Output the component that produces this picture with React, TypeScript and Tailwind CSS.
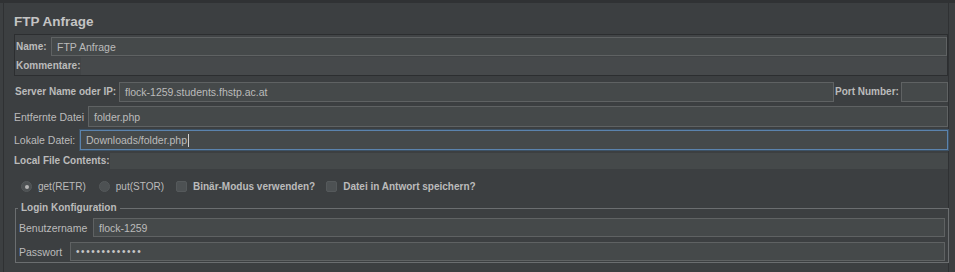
import React from 'react';

const Field: React.FC<{ value?: string; className?: string; focused?: boolean; children?: React.ReactNode }> = ({ value, className = '', focused, children }) => (
  <div
    className={`flex items-center whitespace-nowrap bg-[#45494a] px-[5px] text-[10.5px] text-[#bbbbbb] ${
      focused ? 'border border-[#5b83ad] shadow-[0_0_0_1px_#3d5266]' : 'border border-[#5f6263]'
    } ${className}`}
  >
    {value}
    {children}
  </div>
);

const Radio: React.FC<{ checked?: boolean; label: string }> = ({ checked, label }) => (
  <div className="flex items-center gap-[6px]">
    <span className="flex h-[11px] w-[11px] items-center justify-center rounded-full border border-[#55595b] bg-[#4d5153]">
      {checked && <span className="h-[4px] w-[4px] rounded-full bg-[#b5b5b5]" />}
    </span>
    <span>{label}</span>
  </div>
);

const Check: React.FC<{ label: string }> = ({ label }) => (
  <div className="flex items-center gap-[6px]">
    <span className="h-[11px] w-[11px] rounded-[2px] border border-[#55595b] bg-[#4d5153]" />
    <span className="font-bold">{label}</span>
  </div>
);

export default function App() {
  return (
    <div
      className="relative h-[272px] w-[955px] overflow-hidden bg-[#3c3f41] text-[10px] leading-[12px] text-[#bbbbbb]"
      style={{ fontFamily: '"Liberation Sans", Arial, sans-serif' }}
    >
      <div className="h-[3px] bg-[#303234]" />
      <div className="ml-[3px] mr-[6px] h-[269px] border-l border-r border-[#2f3133] pl-[10px]">
        {/* title */}
        <div className="h-[31px] whitespace-nowrap pt-[11px] text-[13.5px] font-bold leading-[16px] text-[#c4c4c4]">FTP Anfrage</div>

        {/* name + kommentare */}
        <div className="h-[42px] border border-[#2c2e30] bg-[#414446]">
          <div className="flex h-[22px] items-center pl-[1px] pt-[1px]">
            <span className="w-[35px] shrink-0 whitespace-nowrap font-bold">Name:</span>
            <Field value="FTP Anfrage" className="h-[19px] flex-1" />
          </div>
          <div className="flex h-[18px] items-stretch pl-[1px]">
            <span className="flex w-[65px] shrink-0 items-center whitespace-nowrap font-bold">Kommentare:</span>
            <div className="flex-1 bg-[#46494b]" />
          </div>
        </div>

        {/* server */}
        <div className="mt-[6px] flex h-[20px] items-stretch">
          <span className="flex w-[105px] shrink-0 items-center whitespace-nowrap pl-[1px] font-bold">Server Name oder IP:</span>
          <Field value="flock-1259.students.fhstp.ac.at" className="w-[715px] shrink-0" />
          <span className="flex w-[67px] shrink-0 items-center whitespace-nowrap pl-[1px] font-bold">Port Number:</span>
          <Field className="w-[47px] shrink-0" />
        </div>

        {/* entfernte */}
        <div className="mt-[4px] flex h-[21px] items-stretch">
          <span className="flex w-[74px] shrink-0 items-center whitespace-nowrap text-[10.5px]">Entfernte Datei</span>
          <Field value="folder.php" className="flex-1" />
        </div>

        {/* lokale */}
        <div className="mt-[3px] flex h-[20px] items-stretch">
          <span className="flex w-[66px] shrink-0 items-center whitespace-nowrap text-[10.5px]">Lokale Datei:</span>
          <Field focused className="flex-1">
            <span>Downloads/folder.php</span>
            <span className="ml-[1px] h-[13px] w-[1px] bg-[#d0d0d0]" />
          </Field>
        </div>

        {/* local file contents */}
        <div className="mt-[3px] flex h-[16px] items-stretch">
          <span className="flex w-[96px] shrink-0 items-center whitespace-nowrap font-bold">Local File Contents:</span>
          <div className="flex-1 bg-[#45494a]" />
        </div>

        {/* options */}
        <div className="flex h-[34px] items-center whitespace-nowrap pl-[7px] pt-[1px]">
          <Radio checked label="get(RETR)" />
          <div className="ml-[13px]">
            <Radio label="put(STOR)" />
          </div>
          <div className="ml-[12px]">
            <Check label="Binär-Modus verwenden?" />
          </div>
          <div className="ml-[11px]">
            <Check label="Datei in Antwort speichern?" />
          </div>
        </div>

        {/* login */}
        <div className="relative ml-[1px] mt-[5px] h-[55px] w-[934px] border border-[#6b6e70] px-[3px] pt-[9px]">
          <span className="absolute -top-[7px] left-[2px] whitespace-nowrap bg-[#3c3f41] px-[3px] font-bold">Login Konfiguration</span>
          <div className="flex h-[19px] items-stretch">
            <span className="flex w-[74px] shrink-0 items-center whitespace-nowrap text-[10.5px]">Benutzername</span>
            <Field value="flock-1259" className="flex-1" />
          </div>
          <div className="mt-[5px] flex h-[19px] items-stretch">
            <span className="flex w-[51px] shrink-0 items-center whitespace-nowrap text-[10.5px]">Passwort</span>
            <Field className="flex-1">
              <span className="text-[10px] tracking-[1.6px] text-[#c8c8c8]">•••••••••••••</span>
            </Field>
          </div>
        </div>
      </div>
    </div>
  );
}
